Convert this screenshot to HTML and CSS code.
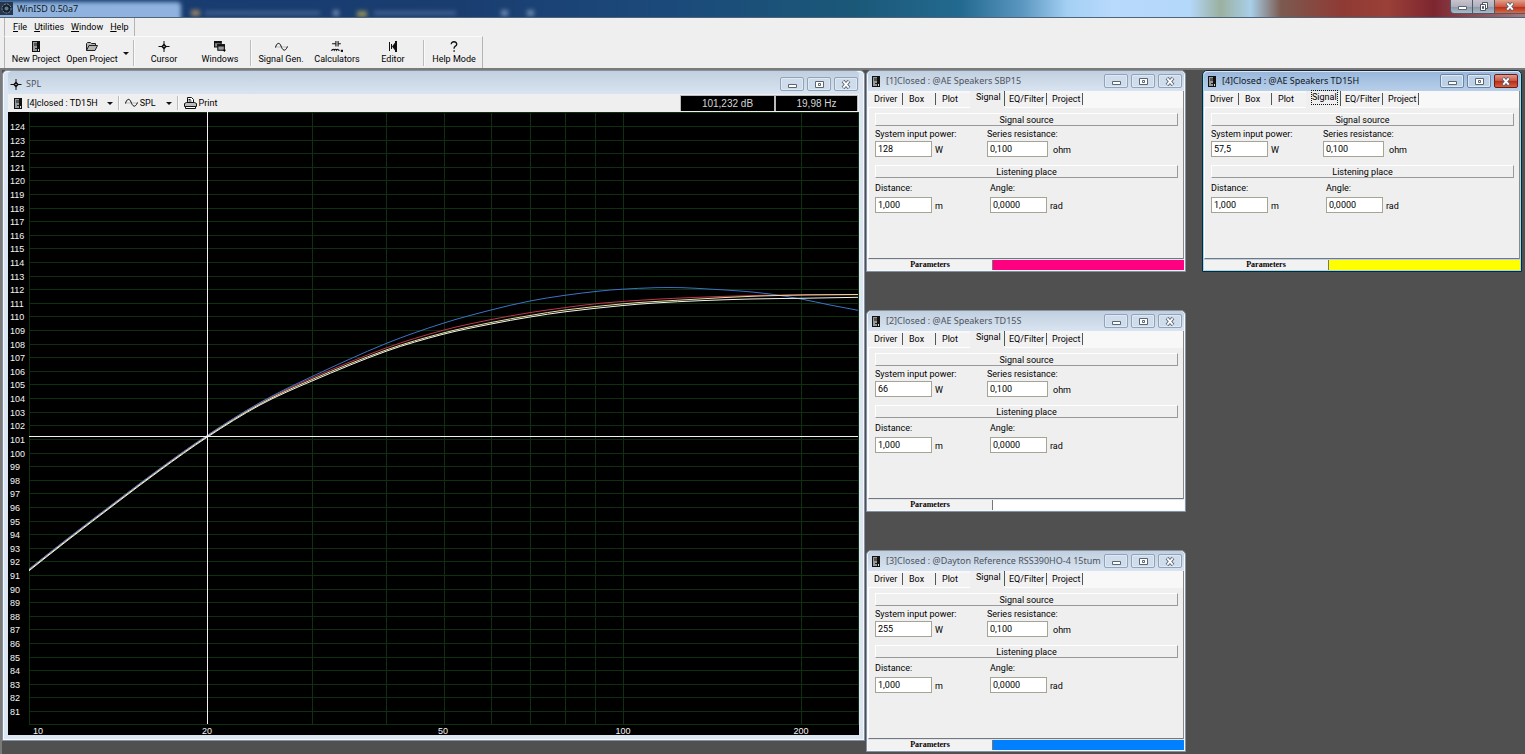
FILE: index.html
```html
<!DOCTYPE html>
<html lang="en">
<head>
<meta charset="utf-8">
<title>WinISD 0.50a7</title>
<link rel="stylesheet" href="styles.css">
</head>
<body>
<svg class="symbols" aria-hidden="true">
  <symbol id="i-box" viewBox="0 0 8 11"><path d="M0 0h8v11H0z" fill="#111"/><path d="M1 1h4v9H1z" fill="#999"/><path d="M2 2h3v3H2z" fill="#555"/><path d="M3 7h2v1H3z" fill="#222"/><path d="M6 8h1v2H6z" fill="#ddd"/></symbol>
  <symbol id="i-folder" viewBox="0 0 12 9"><path d="M.5 8.500V1.500L1.500.5h3l1 1h4v2M.5 8.500l2.500-5h8.500l-2.500 5z" fill="#b4b4b4" stroke="#222"/></symbol>
  <symbol id="i-cursor" viewBox="0 0 11 11"><path d="M5 0h1v11H5zM0 5h11v1H0z" fill="#111"/><path d="M5.500 2.500l3 3-3 3-3-3z" fill="#111"/><path d="M5 5h1v1H5z" fill="#fff"/></symbol>
  <symbol id="i-windows" viewBox="0 0 11 10"><path d="M.5.5h6v5h-6z" fill="#888" stroke="#111"/><path d="M3.500 3.500h6v5h-6z" fill="#999" stroke="#111"/><path d="M0 0h7v2H0zM3 3h7v2H3z" fill="#111"/><path d="M8 8l3 0-1.500 2z"/></symbol>
  <symbol id="i-sine" viewBox="0 0 13 9"><path d="M0 4.500h13" stroke="#999" stroke-width=".6"/><path d="M.5 5C1.500.5 4.500-.8 6 3.500S10 10 12.500 4" fill="none" stroke="#111"/></symbol>
  <symbol id="i-calc" viewBox="0 0 11 10"><path d="M1 2.500h3M6 2.500h3M4.500 0v5M6.500 0v5" stroke="#111" fill="none"/><path d="M0 8.500h1q1-2 2 0q1-2 2 0q1-2 2 0h1" fill="none" stroke="#111"/><path d="M9 8h2v2H9z" fill="#111"/></symbol>
  <symbol id="i-editor" viewBox="0 0 8 11"><path d="M0 1h1v9H0zM2 3h1v5H2zM3 5.500L6.500 1v9z" fill="#111"/><path d="M6 0h2v11H6z" fill="#111"/></symbol>
  <symbol id="i-help" viewBox="0 0 7 10"><path d="M1 3Q1 .7 3.500.7T6 3Q6 4 4.500 4.900Q3.500 5.500 3.500 7" fill="none" stroke="#111" stroke-width="1.200"/><path d="M3 8.500h1.200v1.300H3z"/></symbol>
  <symbol id="i-printer" viewBox="0 0 13 12"><path d="M3.500 5.500v-5h4l2 2v3" fill="#fff" stroke="#111"/><path d="M4.500 2.500h2M4.500 4h3" stroke="#111"/><path d="M.5 6.500l2-1h8l2 1v3H.5z" fill="#bbb" stroke="#111"/><path d="M1.500 9.500h10v2h-10z" fill="#fff" stroke="#111"/></symbol>
  <symbol id="i-min" viewBox="0 0 12 9"><path d="M2.500 4.500h8v3h-8z" fill="#fff" stroke="#5c6673"/></symbol>
  <symbol id="i-max" viewBox="0 0 12 9"><path d="M2.500 1.500h8v6h-8z" fill="#fff" stroke="#5c6673"/><path d="M5.500 3.500h2v2h-2z" fill="#fff" stroke="#5c6673"/></symbol>
  <symbol id="i-restore" viewBox="0 0 12 9"><path d="M4.500.5h5v6h-5z" fill="#fff" stroke="#4c5663"/><path d="M2.500 2.500h5v6h-5z" fill="#fff" stroke="#4c5663"/><path d="M4.500 4.500h1v2h-1z" fill="#4c5663" stroke="#4c5663"/></symbol>
  <symbol id="i-close" viewBox="0 0 12 9"><path d="M3 1l6 7M9 1l-6 7" stroke="#5c6673" stroke-width="3.600"/><path d="M3.300 1.400l5.400 6.200M8.700 1.400l-5.400 6.200" stroke="#fff" stroke-width="1.800"/></symbol>
  <symbol id="i-app" viewBox="0 0 13 13"><path d="M0 0h13v13H0z" fill="#27374b"/><circle cx="6.500" cy="6.500" r="4.500" fill="#16202c" stroke="#7f95ac" stroke-dasharray="2 1"/><circle cx="6.500" cy="6.500" r="2" fill="#5d7a96"/></symbol>
</svg>

<header class="app-title">
  <span class="ghost ghost-tab"></span>
  <span class="ghost ghost-a"></span><span class="ghost ghost-b"></span><span class="ghost ghost-c"></span><span class="ghost ghost-d"></span><span class="ghost ghost-e"></span><span class="ghost ghost-f"></span><span class="ghost ghost-g"></span>
  <svg class="app-icon"><use href="#i-app"/></svg>
  <h1>WinISD 0.50a7</h1>
  <div class="app-controls">
    <button class="ac" aria-label="Minimize"><svg><use href="#i-min"/></svg></button>
    <button class="ac" aria-label="Restore"><svg><use href="#i-restore"/></svg></button>
    <button class="ac ac-close" aria-label="Close"><svg><use href="#i-close"/></svg></button>
  </div>
</header>

<nav class="menu">
  <button><u>F</u>ile</button><button><u>U</u>tilities</button><button><u>W</u>indow</button><button><u>H</u>elp</button>
</nav>

<div class="toolbar" role="toolbar">
  <button class="tool"><svg class="w8"><use href="#i-box"/></svg>New Project</button>
  <button class="tool"><svg class="w12"><use href="#i-folder"/></svg>Open Project</button>
  <button class="drop" aria-label="Recent projects"><i class="caret"></i></button>
  <i class="sep"></i>
  <button class="tool"><svg class="w12"><use href="#i-cursor"/></svg>Cursor</button>
  <button class="tool"><svg class="w12"><use href="#i-windows"/></svg>Windows</button>
  <i class="sep"></i>
  <button class="tool"><svg class="w13"><use href="#i-sine"/></svg>Signal Gen.</button>
  <button class="tool"><svg class="w12"><use href="#i-calc"/></svg>Calculators</button>
  <button class="tool"><svg class="w8"><use href="#i-editor"/></svg>Editor</button>
  <i class="sep"></i>
  <button class="tool"><svg class="w8"><use href="#i-help"/></svg>Help Mode</button>
</div>

<main class="desk" id="desk">
  <section class="win plot-win">
    <div class="caption">
      <svg class="w12"><use href="#i-cursor"/></svg>
      <h2>SPL</h2>
      <div class="controls">
        <button aria-label="Minimize"><svg><use href="#i-min"/></svg></button>
        <button aria-label="Maximize"><svg><use href="#i-max"/></svg></button>
        <button aria-label="Close"><svg><use href="#i-close"/></svg></button>
      </div>
    </div>
    <div class="plot-bar">
      <button class="pb"><svg class="w8"><use href="#i-box"/></svg><span>[4]closed : TD15H</span><i class="caret"></i></button>
      <i class="sep"></i>
      <button class="pb tight"><svg class="w13"><use href="#i-sine"/></svg>SPL<i class="caret"></i></button>
      <i class="sep"></i>
      <button class="pb tight"><svg class="w13"><use href="#i-printer"/></svg>Print</button>
      <output class="read level">101,232 dB</output>
      <output class="read freq">19,98 Hz</output>
    </div>
    <svg class="chart" id="chart" viewBox="0 0 851 623" role="img" aria-label="SPL in dB against frequency in Hz"></svg>
  </section>
</main>
<script src="script.js"></script>
</body>
</html>
```

FILE: styles.css
```css
* { box-sizing: border-box; }
body {
  margin: 0;
  min-height: 100vh;
  display: flex;
  flex-direction: column;
  overflow: hidden;
  background: #efefef;
  color: #000;
  font: 9px/13px "Roboto", sans-serif;
}
button {
  margin: 0;
  padding: 0;
  border: 0;
  background: none;
  color: inherit;
  font: inherit;
  white-space: nowrap;
}
h1, h2 { margin: 0; font: 9px/14px "Noto Sans", sans-serif; white-space: nowrap; }
svg { display: block; flex: none; }
.symbols { position: absolute; width: 0; height: 0; }
.w8 { width: 8px; height: 11px; }
.w12 { width: 12px; height: 11px; }
.w13 { width: 13px; height: 12px; }

.app-title {
  position: relative;
  display: flex;
  align-items: center;
  height: 18px;
  overflow: hidden;
  border-bottom: 1px solid #4f6478;
  background: linear-gradient(90deg, #173c70 0, #1a3d70 30%, #1b4a7a 44%, #1b5878 56%, #236a90 63%, #5a96c0 67%, #a4d0f4 70%, #b8dafc 73%, #b4d8fa 78%, #9bb0a0 80%, #a8cfe8 82%, #7c5a50 84%, #8f3a34 88%, #9a4038 91%, #7e2630 94%, #a07a80 100%);
}
.app-icon { position: relative; width: 13px; height: 13px; }
.app-title h1 { position: relative; margin-left: 4px; color: #101820; flex: 1; }
.ghost { position: absolute; filter: blur(2px); background: #8aa4c8; opacity: .35; }
.ghost-tab { left: -8px; top: 2px; width: 189px; height: 24px; background: #9cc0ea; opacity: .9; border-radius: 4px; }
.ghost-a { left: 191px; top: 10px; width: 9px; height: 6px; background: #c8a060; opacity: .7; }
.ghost-b { left: 205px; top: 11px; width: 115px; height: 4px; }
.ghost-c { left: 333px; top: 10px; width: 6px; height: 6px; opacity: .7; }
.ghost-d { left: 357px; top: 11px; width: 10px; height: 6px; background: #c0b050; opacity: .7; }
.ghost-e { left: 374px; top: 11px; width: 82px; height: 4px; }
.ghost-f { left: 501px; top: 10px; width: 7px; height: 6px; opacity: .7; }
.ghost-g { left: 527px; top: 10px; width: 7px; height: 6px; opacity: .7; }
.app-controls {
  position: relative;
  align-self: flex-start;
  display: flex;
  height: 14px;
  border: 1px solid #4e5866;
  border-width: 0 0 1px 1px;
  border-radius: 0 0 0 4px;
  overflow: hidden;
}
.ac { width: 22px; display: grid; place-items: center; border-right: 1px solid #4e5866; background: linear-gradient(#c9c3cc 0, #b0b0bd 50%, #8a98a8 51%, #a9bac8 100%); }
.ac svg { width: 12px; height: 9px; }
.ac-close { width: 30px; border: 0; background: linear-gradient(#e0a08c 0, #cf5a44 50%, #b52a14 51%, #d86a48 100%); }

.menu {
  align-self: flex-start;
  display: flex;
  gap: 7px;
  height: 18px;
  padding: 2px 5px 1px 8px;
  margin-left: 4px;
  border-left: 1px solid #b4b4b4;
  border-right: 1px solid #b4b4b4;
}
.toolbar {
  align-self: flex-start;
  display: flex;
  height: 32px;
  margin-left: 4px;
  padding: 3px 0 2px 3px;
  border-left: 1px solid #b4b4b4;
  border-right: 1px solid #b4b4b4;
  border-top: 1px solid #fafafa;
}
.tool { width: 56px; display: flex; flex-direction: column; align-items: center; justify-content: space-between; padding-top: 1px; }
.drop { width: 11px; display: grid; place-items: center; }
.caret { border: 3px solid transparent; border-top-color: #111; border-bottom: 0; }
.sep { width: 1px; margin: 0 2px; background: #bcbcbc; box-shadow: 1px 0 #fafafa; }

.desk {
  position: relative;
  flex: 1;
  min-height: 686px;
  overflow: hidden;
  background: #505050;
  border-top: 2px solid #7a7a7a;
  border-left: 2px solid #7a7a7a;
}
.win {
  position: absolute;
  display: flex;
  flex-direction: column;
  border: 1px solid #8492a2;
  border-radius: 5px 5px 0 0;
  background: #dbe6f2;
  box-shadow: inset 0 0 0 1px #f4f8fc;
}
.caption {
  display: flex;
  align-items: center;
  height: 20px;
  border-radius: 4px 4px 0 0;
  background: linear-gradient(#c2cfde, #d8e4f1);
  color: #4c545e;
}
.caption h2 { flex: 1; min-width: 0; }
.controls { display: flex; gap: 3px; }
.controls button {
  width: 24px;
  height: 14px;
  display: grid;
  place-items: center;
  border: 1px solid #92a2b8;
  border-radius: 2px;
  background: #cfdceb;
  box-shadow: inset 0 0 0 1px #dfe9f4;
}
.controls svg { width: 12px; height: 9px; }

.plot-win { left: 0; top: 0; width: 863px; padding: 0 5px 5px; }
.plot-win .caption { height: 23px; padding: 3px 1px 0 2px; gap: 4px; }
.plot-bar { display: flex; align-items: stretch; height: 18px; padding: 1px 1px 1px 6px; background: #efefef; }
.plot-bar .sep { margin: 1px 6px 1px 5px; }
.pb { display: flex; align-items: center; gap: 5px; }
.tight { gap: 2px; }
.pb .caret { margin-left: 4px; }
.tight .caret { margin-left: 8px; }
.read {
  display: grid;
  place-items: center;
  border: 1px solid #bbb;
  border-width: 1px 1px 0 1px;
  background: #000;
  color: #d4d4d4;
  font: 10px/13px "Liberation Sans", sans-serif;
}
.level { width: 95px; margin-left: auto; }
.freq { width: 83px; }
.chart { width: 100%; height: auto; background: #000; }
.chart .grid { stroke: #0e300e; shape-rendering: crispEdges; fill: none; }
.chart .cross { stroke: #f4f0f4; shape-rendering: crispEdges; }
.chart .curve { fill: none; stroke-width: 1; }
.chart text { fill: #f4f4f4; font: 9px "Liberation Sans", sans-serif; }

.panel { width: 320px; padding: 0 1px 1px; }
.panel .caption { padding: 0 2px 0 4px; gap: 6px; }
.slot-1 { left: 864px; top: 0; }
.slot-2 { left: 864px; top: 240px; }
.slot-3 { left: 864px; top: 480px; }
.slot-4 { left: 1200px; top: 0; }
.active { border-color: #17242e; box-shadow: inset 0 0 0 1px #8fe0f4; background: #b8d0ea; }
.active .caption { background: linear-gradient(#98b6da, #b8cfea); color: #10161e; box-shadow: inset 0 1px #d8e8f8; }
.active .controls button { border-color: #6c84a4; background: #bcd0e8; }
.active .controls button:last-child { border-color: #6a1c18; background: linear-gradient(#e09a8c 0, #cc5240 50%, #b62c18 51%, #d4603c 100%); box-shadow: none; }
.body { background: #efefef; border-right: 1px solid #8a8a8a; }
.tabs { display: flex; align-items: flex-end; height: 17px; background: #f8f8f8; }
.tabs button { display: flex; justify-content: space-between; height: 15px; padding: 0 0 0 6px; background: #f2f2f2; border-bottom: 1px solid #fff; }
.tabs button::after { content: ""; width: 1px; height: 12px; background: #555; }
.tabs .t35 { width: 35px; }
.tabs .t33 { width: 33px; }
.tabs .t34 { width: 34px; }
.tabs .t42 { width: 42px; padding-left: 4px; }
.tabs .t36 { width: 36px; padding-left: 5px; }
.tabs .t34::after { display: none; }
.tabs [aria-selected="true"] { height: 17px; background: #efefef; border-bottom: 0; }
.tabs [aria-selected="true"]::after { height: 15px; }
.active [aria-selected="true"] span { height: 13px; outline: 1px dotted #111; }
.page { height: 151px; padding: 5px 5px 0 6px; border-left: 1px solid #fff; border-bottom: 1px solid #777; }
.bar {
  height: 13px;
  line-height: 12px;
  text-align: center;
  border: 1px solid #fff;
  border-right-color: #999;
  border-bottom-color: #999;
}
.fields { display: grid; grid-template-columns: 112px 1fr; padding-top: 2px; height: 39px; }
.fields.wide { grid-template-columns: 115px 1fr; padding-top: 4px; }
.fields label { display: block; }
.wide label { padding-bottom: 2px; }
.row { display: flex; align-items: flex-start; gap: 3px; }
.row span { padding-top: 3px; }
.row.far { gap: 5px; }
.row input {
  width: 57px;
  height: 16px;
  padding: 0 0 1px 2px;
  border: 1px solid #a5a495;
  background: #fff;
  color: #000;
  font: inherit;
  border-radius: 0;
}
.row.far input { width: 61px; }
.foot { display: grid; grid-template-columns: 125px 1fr; height: 10px; margin-top: 1px; background: #f2f2f2; }
.foot b { border-right: 1px solid #777; text-align: center; font: 900 8px/10px "Liberation Serif", serif; color: #000; }
.pink i { background: #ff0080; }
.white i { background: #fff; }
.blue i { background: #0080ff; }
.yellow i { background: #ff0; }
```

FILE: script.js
```js
const panels = [
  { slot: 1, title: "[1]Closed : @AE Speakers SBP15", power: "128", color: "pink" },
  { slot: 2, title: "[2]Closed : @AE Speakers TD15S", power: "66", color: "white" },
  { slot: 3, title: "[3]Closed : @Dayton Reference RSS390HO-4 15tum", power: "255", color: "blue" },
  { slot: 4, title: "[4]Closed : @AE Speakers TD15H", power: "57,5", color: "yellow", active: true }
];

function panelHtml(p) {
  const n = p.slot;
  return `<section class="win panel slot-${n} ${p.active ? "active" : ""}">
    <div class="caption">
      <svg class="w8"><use href="#i-box"/></svg>
      <h2>${p.title}</h2>
      <div class="controls">
        <button aria-label="Minimize"><svg><use href="#i-min"/></svg></button>
        <button aria-label="Maximize"><svg><use href="#i-max"/></svg></button>
        <button aria-label="Close"><svg><use href="#i-close"/></svg></button>
      </div>
    </div>
    <div class="body">
      <div class="tabs" role="tablist">
        <button role="tab" class="t35">Driver</button><button role="tab" class="t33">Box</button><button role="tab" class="t34">Plot</button><button role="tab" class="t35" aria-selected="true"><span>Signal</span></button><button role="tab" class="t42">EQ/Filter</button><button role="tab" class="t36">Project</button>
      </div>
      <div class="page">
        <div class="bar">Signal source</div>
        <div class="fields">
          <div><label for="power${n}">System input power:</label><div class="row"><input id="power${n}" value="${p.power}"><span>W</span></div></div>
          <div><label for="res${n}">Series resistance:</label><div class="row far"><input id="res${n}" value="0,100"><span>ohm</span></div></div>
        </div>
        <div class="bar">Listening place</div>
        <div class="fields wide">
          <div><label for="dist${n}">Distance:</label><div class="row"><input id="dist${n}" value="1,000"><span>m</span></div></div>
          <div><label for="angle${n}">Angle:</label><div class="row"><input id="angle${n}" value="0,0000"><span>rad</span></div></div>
        </div>
      </div>
    </div>
    <div class="foot ${p.color}"><b>Parameters</b><i></i></div>
  </section>`;
}
document.getElementById("desk").insertAdjacentHTML("beforeend", panels.map(panelHtml).join(""));

/* Chart: one decade of frequency is 594 units, one dB is 13.605 units. */
const left = 21, right = 850, bottom = 612;
const yOf = db => Math.round(14 + (124 - db) * 13.605) + 0.5;
const xOf = hz => Math.round(left - 0.5 + 594 * Math.log10(hz / 10)) + 0.5;
let out = "";
for (let db = 124; db >= 81; db--) {
  out += `<path class="grid" d="M${left} ${yOf(db)}H${right}"/><text x="2" y="${yOf(db) + 3}">${db}</text>`;
}
for (const hz of [30, 40, 50, 60, 70, 80, 90, 100, 200]) {
  out += `<path class="grid" d="M${xOf(hz)} 0V${bottom}"/>`;
}
out += `<path class="grid" d="M${left + 0.5} 0.5V${bottom + 0.5}H${right + 0.5}V0.5z"/>`;
for (const [hz, x] of [[10, 30], [20, 199], [50, 435], [100, 615], [200, 793]]) {
  out += `<text x="${x}" y="622" text-anchor="middle">${hz}</text>`;
}

function smooth(pts) {
  let d = `M${pts[0]}`;
  for (let i = 0; i < pts.length - 1; i++) {
    const a = pts[i - 1] || pts[i], b = pts[i], c = pts[i + 1], e = pts[i + 2] || c;
    const u = (c[0] - b[0]) / 3;
    const mb = (c[1] - a[1]) / (c[0] - a[0]), mc = (e[1] - b[1]) / (e[0] - b[0]);
    d += `C${b[0] + u} ${b[1] + u * mb} ${c[0] - u} ${c[1] - u * mc} ${c}`;
  }
  return d;
}
const start = [[21, 458], [59, 428], [110, 389], [152, 357.5], [199, 324.5]];
const lift = dy => start.map(([x, y]) => [x, y + dy]);
const curves = [
  ["#c03450", [...lift(-1), [252, 291], [304, 266], [378, 236], [435, 218.3], [483, 207.6], [522, 200.6], [552, 196.3], [592, 191.3], [652, 187], [712, 184.5], [752, 183.3], [792, 182.8], [850, 182.7]]],
  ["#3a74c8", [...lift(-1), [252, 290.5], [304, 264.5], [378, 231.5], [435, 211.3], [483, 198], [522, 189], [557, 183.3], [592, 179], [613, 177.3], [648, 175.7], [674, 175.7], [700, 177], [732, 179], [762, 182], [793, 187], [822, 193], [850, 198.3]]],
  ["#e8e0a0", [...lift(0), [252, 292], [304, 267.5], [378, 238], [435, 221], [483, 210.5], [522, 203.5], [557, 198], [613, 192], [647, 189.5], [712, 185.8], [752, 184], [800, 182.9], [850, 182.5]]],
  ["#f4f4ec", [...lift(0.8), [252, 293], [304, 269], [378, 239.3], [435, 222.3], [483, 212], [522, 205], [557, 199.8], [613, 193.7], [647, 191], [692, 188.7], [742, 187], [792, 186.3], [850, 185.3]]]
];
for (const [color, pts] of curves) out += `<path class="curve" stroke="${color}" d="${smooth(pts)}"/>`;
out += `<path class="cross" d="M199.500 0V${bottom}M${left} 324.500H${right}"/>`;
document.getElementById("chart").innerHTML = out;
```
